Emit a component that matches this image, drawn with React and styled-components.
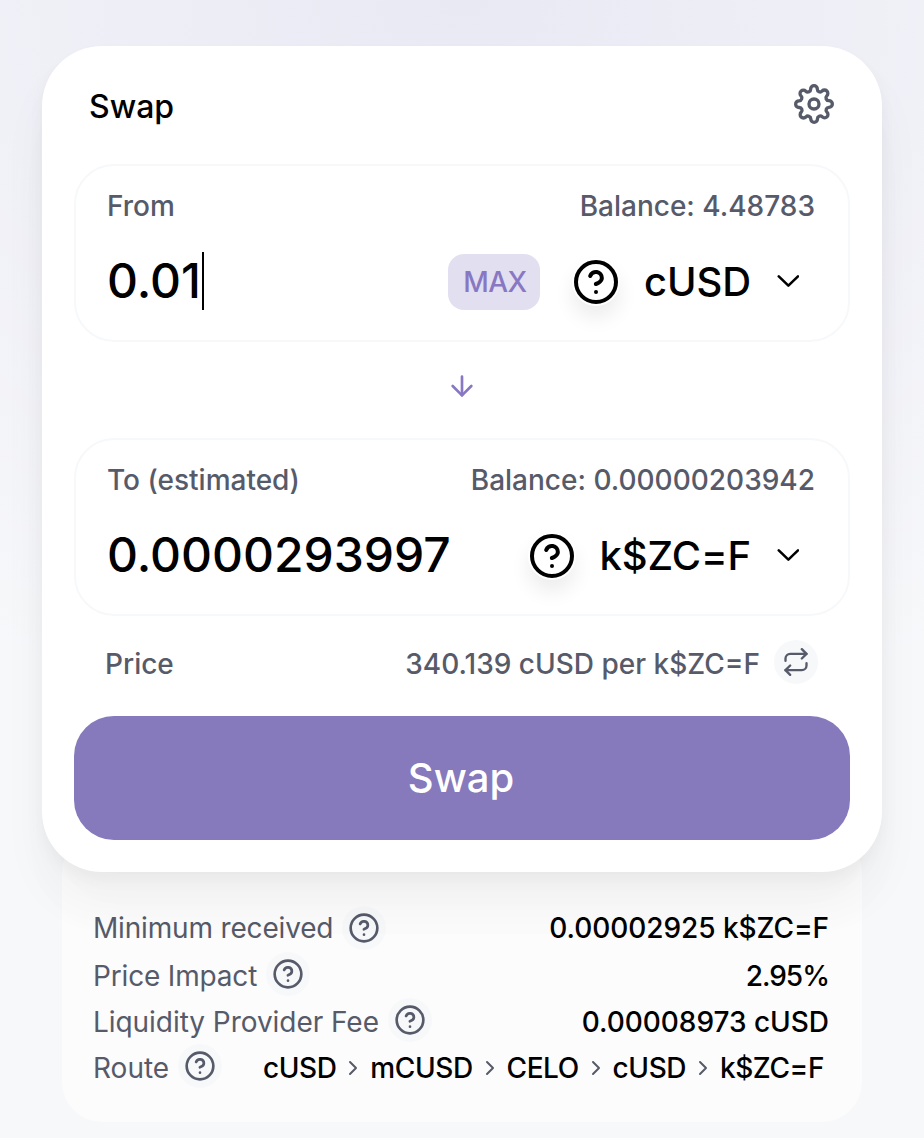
import React from 'react';
import styled, { createGlobalStyle } from 'styled-components';

const GlobalStyle = createGlobalStyle`
  *, *::before, *::after { box-sizing: border-box; }
  body {
    margin: 0;
    font-family: Inter, 'Liberation Sans', sans-serif;
    color: #000;
    background: #f7f8fa;
  }
  button, input { font: inherit; color: inherit; border: 0; background: none; padding: 0; }
`;

const Page = styled.main`
  display: flex;
  flex-direction: column;
  align-items: center;
  height: 1138px;
  overflow: hidden;
  padding-top: 46px;
  background: radial-gradient(940px 740px at 50% 0, #e9e9f4 0%, #f7f8fa 100%);
`;

const Card = styled.section`
  position: relative;
  z-index: 1;
  width: 840px;
  height: 826px;
  padding: 0 32px;
  border-radius: 60px;
  background: #fff;
  box-shadow: 0 0 2px rgba(0, 0, 0, 0.01), 0 8px 16px rgba(0, 0, 0, 0.04),
    0 32px 48px rgba(0, 0, 0, 0.04), 0 48px 64px rgba(0, 0, 0, 0.01);
`;

const Header = styled.header`
  display: flex;
  justify-content: space-between;
  align-items: center;
  height: 118px;
  padding: 0 16px 2px 15px;
`;

const Title = styled.h1`
  margin: 0;
  padding-top: 6px;
  font-size: 32px;
  line-height: 38px;
  font-weight: 500;
`;

const IconButton = styled.button`
  display: flex;
  color: #565a69;
`;

const Panel = styled.div`
  height: 178px;
  padding: 23px 33px 0 31px;
  border: 2px solid #f7f8fa;
  border-radius: 40px;
`;

const PanelLabels = styled.div`
  display: flex;
  justify-content: space-between;
  height: 34px;
  font-size: 28px;
  line-height: 34px;
  font-weight: 500;
  color: #565a69;
`;

const PanelRow = styled.div`
  display: flex;
  align-items: center;
  height: 58px;
  margin-top: 29px;
  padding-right: 16px;
`;

const Amount = styled.div`
  flex: 1;
  display: flex;
  align-items: center;
  height: 58px;
  font-size: 48px;
  line-height: 56px;
  font-weight: 500;
  white-space: nowrap;
`;

const Caret = styled.i`
  width: 2px;
  height: 58px;
  margin-left: 1px;
  background: #000;
`;

const MaxButton = styled.button`
  width: 92px;
  height: 56px;
  margin: 2px 32px 0 0;
  padding-left: 2px;
  border-radius: 16px;
  background: #e2dff0;
  color: #8878c3;
  font-size: 28px;
  font-weight: 500;
  letter-spacing: -0.5px;
`;

const TokenButton = styled.button`
  display: flex;
  align-items: center;
  font-size: 40px;
  line-height: 48px;
  font-weight: 500;
  letter-spacing: -0.1px;
`;

const TokenLogo = styled.span`
  display: flex;
  width: 48px;
  height: 48px;
  margin: 2px 24px 0 0;
  border-radius: 24px;
  background: #fff;
  box-shadow: 0 12px 20px rgba(0, 0, 0, 0.075);
`;

const TokenName = styled.span`
  padding-top: 1px;
`;

const TokenArrow = styled.svg`
  width: 22px;
  height: 14px;
  margin-left: 26px;
`;

const ArrowRow = styled.div`
  display: flex;
  justify-content: center;
  align-items: center;
  height: 96px;
  padding-bottom: 8px;
  color: #8878c3;
`;

const PriceRow = styled.div`
  display: flex;
  align-items: center;
  height: 100px;
  padding: 0 32px 8px 31px;
  font-size: 28px;
  line-height: 34px;
  font-weight: 500;
  color: #565a69;
`;

const PriceText = styled.span`
  padding-top: 4px;
  margin-left: ${(p) => (p.$end ? 'auto' : 0)};
`;

const RoundIcon = styled.span`
  display: flex;
  flex: none;
  justify-content: center;
  align-items: center;
  width: 44px;
  height: 44px;
  margin-top: ${(p) => p.$drop || 0}px;
  margin-left: ${(p) => p.$gap || 9}px;
  border-radius: 50%;
  background: #f7f8fa;
  color: #565a69;
`;

const SwapButton = styled.button`
  display: block;
  width: 100%;
  height: 124px;
  padding: 0 2px 2px 0;
  border-radius: 40px;
  background: #8679bc;
  color: #fff;
  font-size: 40px;
  font-weight: 500;
`;

const Details = styled.section`
  width: 800px;
  height: 290px;
  margin-top: -40px;
  padding: 73px 33px 0 31px;
  border-radius: 40px;
  background: #fcfcfc;
`;

const DetailRow = styled.div`
  display: flex;
  align-items: flex-start;
  height: ${(p) => p.$height || 46}px;
  font-size: 28px;
  line-height: 34px;
`;

const DetailLabel = styled.span`
  padding-top: ${(p) => p.$top}px;
  color: #565a69;
  letter-spacing: ${(p) => p.$tracking}px;
`;

const DetailValue = styled.span`
  display: flex;
  align-items: center;
  margin-left: auto;
  padding-top: ${(p) => p.$top}px;
  font-weight: 500;
  white-space: nowrap;
  letter-spacing: ${(p) => p.$tracking}px;
`;

const Route = styled.span`
  display: flex;
  align-items: center;
  padding-right: 5px;
`;

const RouteSeparator = styled.span`
  display: flex;
  margin: 0 5px 0 4.75px;
  color: #565a69;
`;

function Icon({ size, children }) {
  return (
    <svg width={size} height={size} viewBox="0 0 24 24" fill="none" stroke="currentColor" strokeWidth="2" strokeLinecap="round" strokeLinejoin="round">
      {children}
    </svg>
  );
}

const HelpIcon = ({ size }) => (
  <Icon size={size}>
    <circle cx="12" cy="12" r="10" />
    <path d="M9.09 9a3 3 0 0 1 5.83 1c0 2-3 3-3 3" />
    <line x1="12" y1="17" x2="12.01" y2="17" />
  </Icon>
);

const SettingsIcon = () => (
  <Icon size={40}>
    <circle cx="12" cy="12" r="3" />
    <path d="M19.4 15a1.65 1.65 0 0 0 .33 1.82l.06.06a2 2 0 0 1 0 2.83 2 2 0 0 1-2.83 0l-.06-.06a1.65 1.65 0 0 0-1.82-.33 1.65 1.65 0 0 0-1 1.51V21a2 2 0 0 1-2 2 2 2 0 0 1-2-2v-.09A1.65 1.65 0 0 0 9 19.4a1.65 1.65 0 0 0-1.82.33l-.06.06a2 2 0 0 1-2.83 0 2 2 0 0 1 0-2.83l.06-.06a1.65 1.65 0 0 0 .33-1.82 1.65 1.65 0 0 0-1.51-1H3a2 2 0 0 1-2-2 2 2 0 0 1 2-2h.09A1.65 1.65 0 0 0 4.6 9a1.65 1.65 0 0 0-.33-1.82l-.06-.06a2 2 0 0 1 0-2.83 2 2 0 0 1 2.83 0l.06.06a1.65 1.65 0 0 0 1.82.33H9a1.65 1.65 0 0 0 1-1.51V3a2 2 0 0 1 2-2 2 2 0 0 1 2 2v.09a1.65 1.65 0 0 0 1 1.51 1.65 1.65 0 0 0 1.82-.33l.06-.06a2 2 0 0 1 2.83 0 2 2 0 0 1 0 2.83l-.06.06a1.65 1.65 0 0 0-.33 1.82V9a1.65 1.65 0 0 0 1.51 1H21a2 2 0 0 1 2 2 2 2 0 0 1-2 2h-.09a1.65 1.65 0 0 0-1.51 1z" />
  </Icon>
);

const RepeatIcon = () => (
  <Icon size={28}>
    <polyline points="17 1 21 5 17 9" />
    <path d="M3 11V9a4 4 0 0 1 4-4h14" />
    <polyline points="7 23 3 19 7 15" />
    <path d="M21 13v2a4 4 0 0 1-4 4H3" />
  </Icon>
);

const ArrowDownIcon = () => (
  <Icon size={32}>
    <line x1="12" y1="5" x2="12" y2="19" />
    <polyline points="19 12 12 19 5 12" />
  </Icon>
);

const ChevronRightIcon = () => (
  <Icon size={24}>
    <polyline points="9 18 15 12 9 6" />
  </Icon>
);

function CurrencyPanel({ label, balance, amount, token, editing }) {
  return (
    <Panel>
      <PanelLabels>
        <span>{label}</span>
        <span>Balance: {balance}</span>
      </PanelLabels>
      <PanelRow>
        <Amount>
          {amount}
          {editing && <Caret />}
        </Amount>
        {editing && <MaxButton>MAX</MaxButton>}
        <TokenButton>
          <TokenLogo>
            <HelpIcon size={48} />
          </TokenLogo>
          <TokenName>{token}</TokenName>
          <TokenArrow viewBox="0 0 12 7" fill="none" stroke="#000" strokeWidth="1.4" strokeLinecap="round" strokeLinejoin="round">
            <path d="M0.97168 1L6.20532 6L11.439 1" />
          </TokenArrow>
        </TokenButton>
      </PanelRow>
    </Panel>
  );
}

const steps = ['cUSD', 'mCUSD', 'CELO', 'cUSD', 'k$ZC=F'];

const details = [
  { label: 'Minimum received', labelTracking: -0.17, value: '0.00002925 k$ZC=F', tracking: -0.06, height: 47, top: 6, drop: 1 },
  { label: 'Price Impact', labelTracking: -0.17, value: '2.95%', tracking: -1 },
  { label: 'Liquidity Provider Fee', labelTracking: -0.05, value: '0.00008973 cUSD', tracking: -0.03 },
  {
    label: 'Route',
    labelTracking: 0,
    tracking: -0.4,
    value: (
      <Route>
        {steps.map((step, i) => (
          <React.Fragment key={i}>
            {i > 0 && (
              <RouteSeparator>
                <ChevronRightIcon />
              </RouteSeparator>
            )}
            {step}
          </React.Fragment>
        ))}
      </Route>
    ),
  },
];

export default function App() {
  return (
    <>
      <GlobalStyle />
      <Page>
        <Card>
          <Header>
            <Title>Swap</Title>
            <IconButton aria-label="Settings">
              <SettingsIcon />
            </IconButton>
          </Header>
          <CurrencyPanel label="From" balance="4.48783" amount="0.01" token="cUSD" editing />
          <ArrowRow>
            <ArrowDownIcon />
          </ArrowRow>
          <CurrencyPanel label="To (estimated)" balance="0.00000203942" amount="0.0000293997" token="k$ZC=F" />
          <PriceRow>
            <PriceText>Price</PriceText>
            <PriceText $end>340.139 cUSD per k$ZC=F</PriceText>
            <RoundIcon $gap={14}>
              <RepeatIcon />
            </RoundIcon>
          </PriceRow>
          <SwapButton>Swap</SwapButton>
        </Card>
        <Details>
          {details.map((d) => (
            <DetailRow key={d.label} $height={d.height}>
              <DetailLabel $top={d.top || 7} $tracking={d.labelTracking}>
                {d.label}
              </DetailLabel>
              <RoundIcon $drop={d.drop}>
                <HelpIcon size={32} />
              </RoundIcon>
              <DetailValue $top={d.top || 7} $tracking={d.tracking}>
                {d.value}
              </DetailValue>
            </DetailRow>
          ))}
        </Details>
      </Page>
    </>
  );
}
